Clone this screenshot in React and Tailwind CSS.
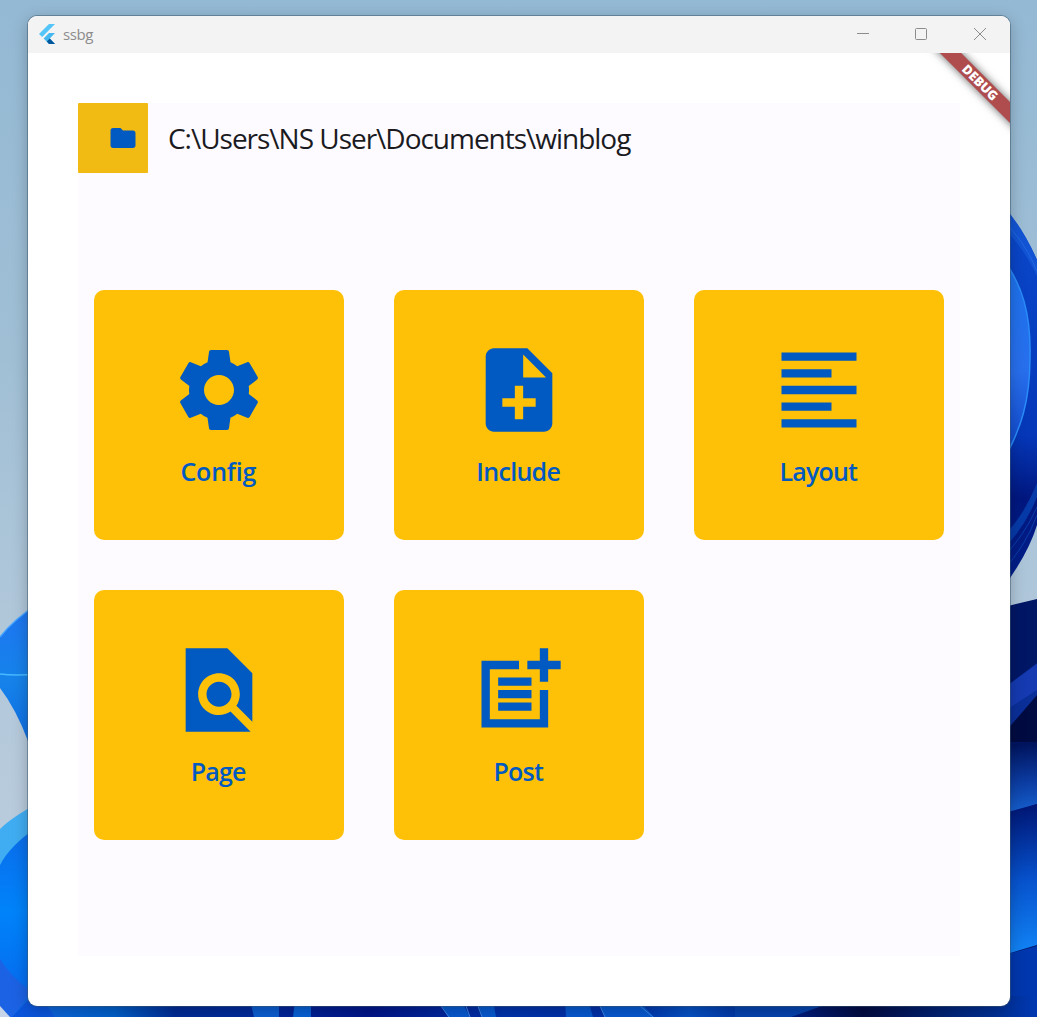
const GLYPHS = {
  settings:
    'M19.14 12.94c.04-.3.06-.61.06-.94 0-.32-.02-.64-.07-.94l2.03-1.58c.18-.14.23-.41.12-.61l-1.92-3.32c-.12-.22-.37-.29-.59-.22l-2.39.96c-.5-.38-1.03-.7-1.62-.94l-.36-2.54c-.04-.24-.24-.41-.48-.41h-3.84c-.24 0-.43.17-.47.41l-.36 2.54c-.59.24-1.13.57-1.62.94l-2.39-.96c-.22-.08-.47 0-.59.22L2.74 8.87c-.12.21-.08.47.12.61l2.03 1.58c-.05.3-.09.63-.09.94s.02.64.07.94l-2.03 1.58c-.18.14-.23.41-.12.61l1.92 3.32c.12.22.37.29.59.22l2.39-.96c.5.38 1.03.7 1.62.94l.36 2.54c.05.24.24.41.48.41h3.84c.24 0 .44-.17.47-.41l.36-2.54c.59-.24 1.13-.56 1.62-.94l2.39.96c.22.08.47 0 .59-.22l1.92-3.32c.12-.22.07-.47-.12-.61l-2.01-1.58zM12 15.6c-1.98 0-3.6-1.62-3.6-3.6s1.62-3.6 3.6-3.6 3.6 1.62 3.6 3.6-1.62 3.6-3.6 3.6z',
  noteAdd:
    'M14 2H6c-1.1 0-1.99.9-1.99 2L4 20c0 1.1.89 2 1.99 2H18c1.1 0 2-.9 2-2V8l-6-6zm2 14h-3v3h-2v-3H8v-2h3v-3h2v3h3v2zm-3-7V3.5L18.5 9H13z',
  alignLeft:
    'M15 15H3v2h12v-2zm0-8H3v2h12V7zM3 13h18v-2H3v2zm0 8h18v-2H3v2zM3 3v2h18V3H3z',
  findInPage:
    'M20 19.59V8l-6-6H4v20h15.59l-4.83-4.83c-.8.52-1.74.83-2.76.83-2.76 0-5-2.24-5-5s2.24-5 5-5 5 2.24 5 5c0 1.02-.31 1.96-.83 2.75L20 19.59zM9 13c0 1.66 1.34 3 3 3s3-1.34 3-3-1.34-3-3-3-3 1.34-3 3z',
  postAdd:
    'M17 12v7H5V7h7V5H3v16h16v-9h-2zM19 2h-2v3h-3v2h3v3h2V7h3V5h-3V2zM7 9h8v2H7zM7 12h8v2H7zM7 15h8v2H7z',
  folder:
    'M10 4H4c-1.1 0-1.99.9-1.99 2L2 18c0 1.1.9 2 2 2h16c1.1 0 2-.9 2-2V8c0-1.1-.9-2-2-2h-8l-2-2z',
};

const TILES = [
  { label: 'Config', glyph: GLYPHS.settings, tracking: 'tracking-[-0.2px]' },
  { label: 'Include', glyph: GLYPHS.noteAdd, tracking: 'tracking-[-0.7px]' },
  { label: 'Layout', glyph: GLYPHS.alignLeft, tracking: 'tracking-[-0.8px]' },
  { label: 'Page', glyph: GLYPHS.findInPage, tracking: 'tracking-[-0.8px]' },
  { label: 'Post', glyph: GLYPHS.postAdd, tracking: 'tracking-[-0.8px]' },
];

function Glyph({ d, className }) {
  return (
    <svg viewBox="0 0 24 24" fill="currentColor" className={className}>
      <path d={d} />
    </svg>
  );
}

function Wallpaper() {
  return (
    <svg viewBox="0 0 1037 1017" className="absolute inset-0 h-full w-full">
      <defs>
        <linearGradient id="sky" x1="0" y1="0" x2="0" y2="1">
          <stop offset="0" stopColor="#94b9d4" />
          <stop offset="0.35" stopColor="#a0bfd5" />
          <stop offset="0.6" stopColor="#b0c7da" />
          <stop offset="1" stopColor="#c0cfdf" />
        </linearGradient>
        <linearGradient id="ringInner" x1="0" y1="0" x2="0" y2="1">
          <stop offset="0" stopColor="#1c72ed" />
          <stop offset="0.55" stopColor="#286fed" />
          <stop offset="1" stopColor="#0b3fc5" />
        </linearGradient>
        <linearGradient id="ringOuter" x1="0" y1="0" x2="0" y2="1">
          <stop offset="0" stopColor="#0b49cc" />
          <stop offset="0.6" stopColor="#0537b8" />
          <stop offset="0.76" stopColor="#01177f" />
          <stop offset="1" stopColor="#02218c" />
        </linearGradient>
        <linearGradient id="petalLeft" x1="0" y1="0" x2="0" y2="1">
          <stop offset="0" stopColor="#1e74f2" />
          <stop offset="0.5" stopColor="#1683ea" />
          <stop offset="1" stopColor="#0d68e2" />
        </linearGradient>
        <linearGradient id="bloomLeft" x1="0" y1="0" x2="0" y2="1">
          <stop offset="0" stopColor="#0c6be9" />
          <stop offset="0.45" stopColor="#0083fa" />
          <stop offset="1" stopColor="#0865ec" />
        </linearGradient>
        <linearGradient id="bandA" x1="0" y1="0" x2="0" y2="1">
          <stop offset="0" stopColor="#00125a" />
          <stop offset="0.5" stopColor="#0b399d" />
          <stop offset="1" stopColor="#1764d5" />
        </linearGradient>
        <linearGradient id="bandB" x1="0" y1="0" x2="0" y2="1">
          <stop offset="0" stopColor="#001573" />
          <stop offset="0.5" stopColor="#0752cd" />
          <stop offset="1" stopColor="#1286f7" />
        </linearGradient>
        <linearGradient id="floor" x1="0" y1="0" x2="1" y2="0">
          <stop offset="0" stopColor="#1368e6" />
          <stop offset="0.1" stopColor="#005fc9" />
          <stop offset="0.16" stopColor="#002b96" />
          <stop offset="0.24" stopColor="#002a9c" />
          <stop offset="0.35" stopColor="#00158a" />
          <stop offset="0.48" stopColor="#0033ad" />
          <stop offset="0.6" stopColor="#002fa8" />
          <stop offset="0.66" stopColor="#0551c5" />
          <stop offset="0.75" stopColor="#00228c" />
          <stop offset="0.83" stopColor="#000b42" />
          <stop offset="0.93" stopColor="#002983" />
          <stop offset="1" stopColor="#0038b0" />
        </linearGradient>
      </defs>
      <rect width="1037" height="1017" fill="url(#sky)" />

      <path d="M1000 202Q1022 226 1037 260V525Q1028 555 1000 592Z" fill="url(#ringOuter)" />
      <path d="M1000 202Q1022 226 1037 260V276Q1022 244 1000 225Z" fill="#1254d4" />
      <path d="M1000 218Q1024 239 1037 271" fill="none" stroke="#2a70e4" strokeWidth="0.7" />
      <path d="M1000 255C1023 284 1031 315 1030 357C1030 400 1022 429 1000 466Z" fill="url(#ringInner)" stroke="#2a8cf8" strokeWidth="1.5" />
      <path d="M1000 539Q1022 520 1037 483V497Q1024 530 1000 552Z" fill="#063aa8" />
      <path d="M1000 561Q1025 535 1037 507M1000 574Q1025 548 1037 515" fill="none" stroke="#0c46b4" strokeWidth="0.8" />

      <path d="M1000 608L1037 599V1017H1000Z" fill="#001766" />
      <path d="M1000 700L1037 680V742H1000Z" fill="#000b42" />
      <path d="M1000 691L1037 663V695L1000 738Z" fill="#0b2f99" />
      <path d="M1000 691L1037 664V690L1000 714Z" fill="#153ab1" />
      <path d="M1000 744L1037 742V804L1000 816Z" fill="url(#bandA)" />
      <path d="M1000 814L1037 804V945L1000 956Z" fill="url(#bandB)" />
      <path d="M1000 956L1037 946V1017H1000Z" fill="#0037ae" />

      <path d="M0 637Q13 620 40 602V756L28 741Q16 709 0 688Z" fill="url(#petalLeft)" />
      <path d="M0 637Q13 620 40 602" fill="none" stroke="#47a5ff" strokeWidth="1.5" />
      <path d="M0 674Q14 676 40 674" fill="none" stroke="#46baff" strokeWidth="1.5" />
      <path d="M0 829Q12 817 40 802V1017H0Z" fill="#40adf2" />
      <path d="M0 865Q10 845 40 825V1017H0Z" fill="url(#bloomLeft)" />
      <path d="M0 959Q12 979 40 998V1017H0Z" fill="#1c62e4" />
      <path d="M0 1006L10 1017H0Z" fill="#c8d5e8" />

      <path d="M28 996H1037V1017H12Z" fill="url(#floor)" />
      <path d="M28 1000H43L55 1017H12Z" fill="#0b55dc" />
      <path d="M250 1000H279V1017H254Z" fill="#0c5ed2" />
      <path d="M295 1000H311V1017H293Z" fill="#0760d6" />
      <path d="M438 1000H461L470 1017H448ZM477 1000H493L496 1017H482ZM565 1000H588L593 1017H566ZM598 1000H638L654 1017H605Z" fill="#0759d1" />
      <path d="M441 1006L449 1017M466 1006L470 1017M478 1006L482 1017M600 1006L605 1017M640 1006L653 1017" fill="none" stroke="#3989e8" strokeWidth="1" />
      <path d="M735 1006H822L791 1017H735Z" fill="#0644af" />
    </svg>
  );
}

function FlutterLogo() {
  return (
    <svg viewBox="0 0 16 20" className="h-5 w-4">
      <path d="M10 0H16L3.2 13L0 10Z" fill="#54c5f8" />
      <path d="M10 9H16L10.8 14.4L16 20H10L4.6 14.4Z" fill="#45b8f0" />
      <path d="M7.8 17.4L10.8 14.4L16 20H10Z" fill="#01579b" />
    </svg>
  );
}

function TitleBar() {
  return (
    <header className="flex h-[37px] shrink-0 items-center bg-[#f3f3f3] pb-0.5 pl-[11px] text-[#8c8c8c]">
      <FlutterLogo />
      <span className="ml-2 flex-1 text-[15px] leading-5 tracking-[-0.4px]">ssbg</span>
      <svg viewBox="0 0 12 12" className="mr-[46px] h-3 w-3" fill="none" stroke="currentColor">
        <path d="M0 5.5H12" />
      </svg>
      <svg viewBox="0 0 12 12" className="mr-[47px] h-3 w-3" fill="none" stroke="currentColor">
        <rect x="0.5" y="0.5" width="11" height="11" rx="1" />
      </svg>
      <svg viewBox="0 0 12 12" className="mr-6 h-3 w-3" fill="none" stroke="currentColor">
        <path d="M0 0L12 12M12 0L0 12" />
      </svg>
    </header>
  );
}

function DebugBanner() {
  return (
    <div className="absolute top-0 right-0 h-24 w-24 overflow-hidden">
      <div className="absolute top-[22.4px] left-[6.2px] flex h-[15px] w-[120px] rotate-45 items-center justify-center bg-[#ae4c4e] text-[13px] leading-[15px] font-extrabold tracking-[-0.1px] text-white shadow-[0_0_9px_rgba(0,0,0,0.6)]">
        DEBUG
      </div>
    </div>
  );
}

function Tile({ label, glyph, tracking }) {
  return (
    <button className="flex h-[250px] w-[250px] flex-col items-center rounded-[10px] bg-[#ffc107] pt-[50px] text-[#005ac1]">
      <Glyph d={glyph} className="h-[100px] w-[100px]" />
      <span className={`mt-[13px] mr-[1.5px] text-[25px] leading-9 font-semibold ${tracking}`}>{label}</span>
    </button>
  );
}

export default function App() {
  return (
    <div className="relative h-[1017px] w-[1037px] overflow-hidden pt-4 pl-7 font-['Open_Sans','Noto_Sans',sans-serif]">
      <Wallpaper />
      <div className="relative flex h-[990px] w-[982px] flex-col overflow-hidden rounded-[9px] bg-white shadow-[0_0_0_1px_rgba(60,85,105,0.5),0_4px_16px_rgba(0,0,0,0.25)]">
        <TitleBar />
        <div className="relative flex flex-1 flex-col p-[50px]">
          <DebugBanner />
          <main className="flex flex-1 flex-col bg-[#fdfbff]">
            <div className="flex h-[70px] items-center">
              <button className="flex h-[70px] w-[70px] items-center rounded-[1px] bg-[#f1bb13] pl-[30px] text-[#005ac1]">
                <Glyph d={GLYPHS.folder} className="h-[30px] w-[30px] shrink-0" />
              </button>
              <h1 className="ml-5 text-[28px] leading-9 tracking-[-1.02px] text-[#1b1b1f]">
                C:\Users\NS User\Documents\winblog
              </h1>
            </div>
            <div className="flex flex-1 items-center justify-center">
              <div className="grid grid-cols-3 gap-[50px]">
                {TILES.map((tile) => (
                  <Tile key={tile.label} {...tile} />
                ))}
              </div>
            </div>
          </main>
        </div>
      </div>
    </div>
  );
}
